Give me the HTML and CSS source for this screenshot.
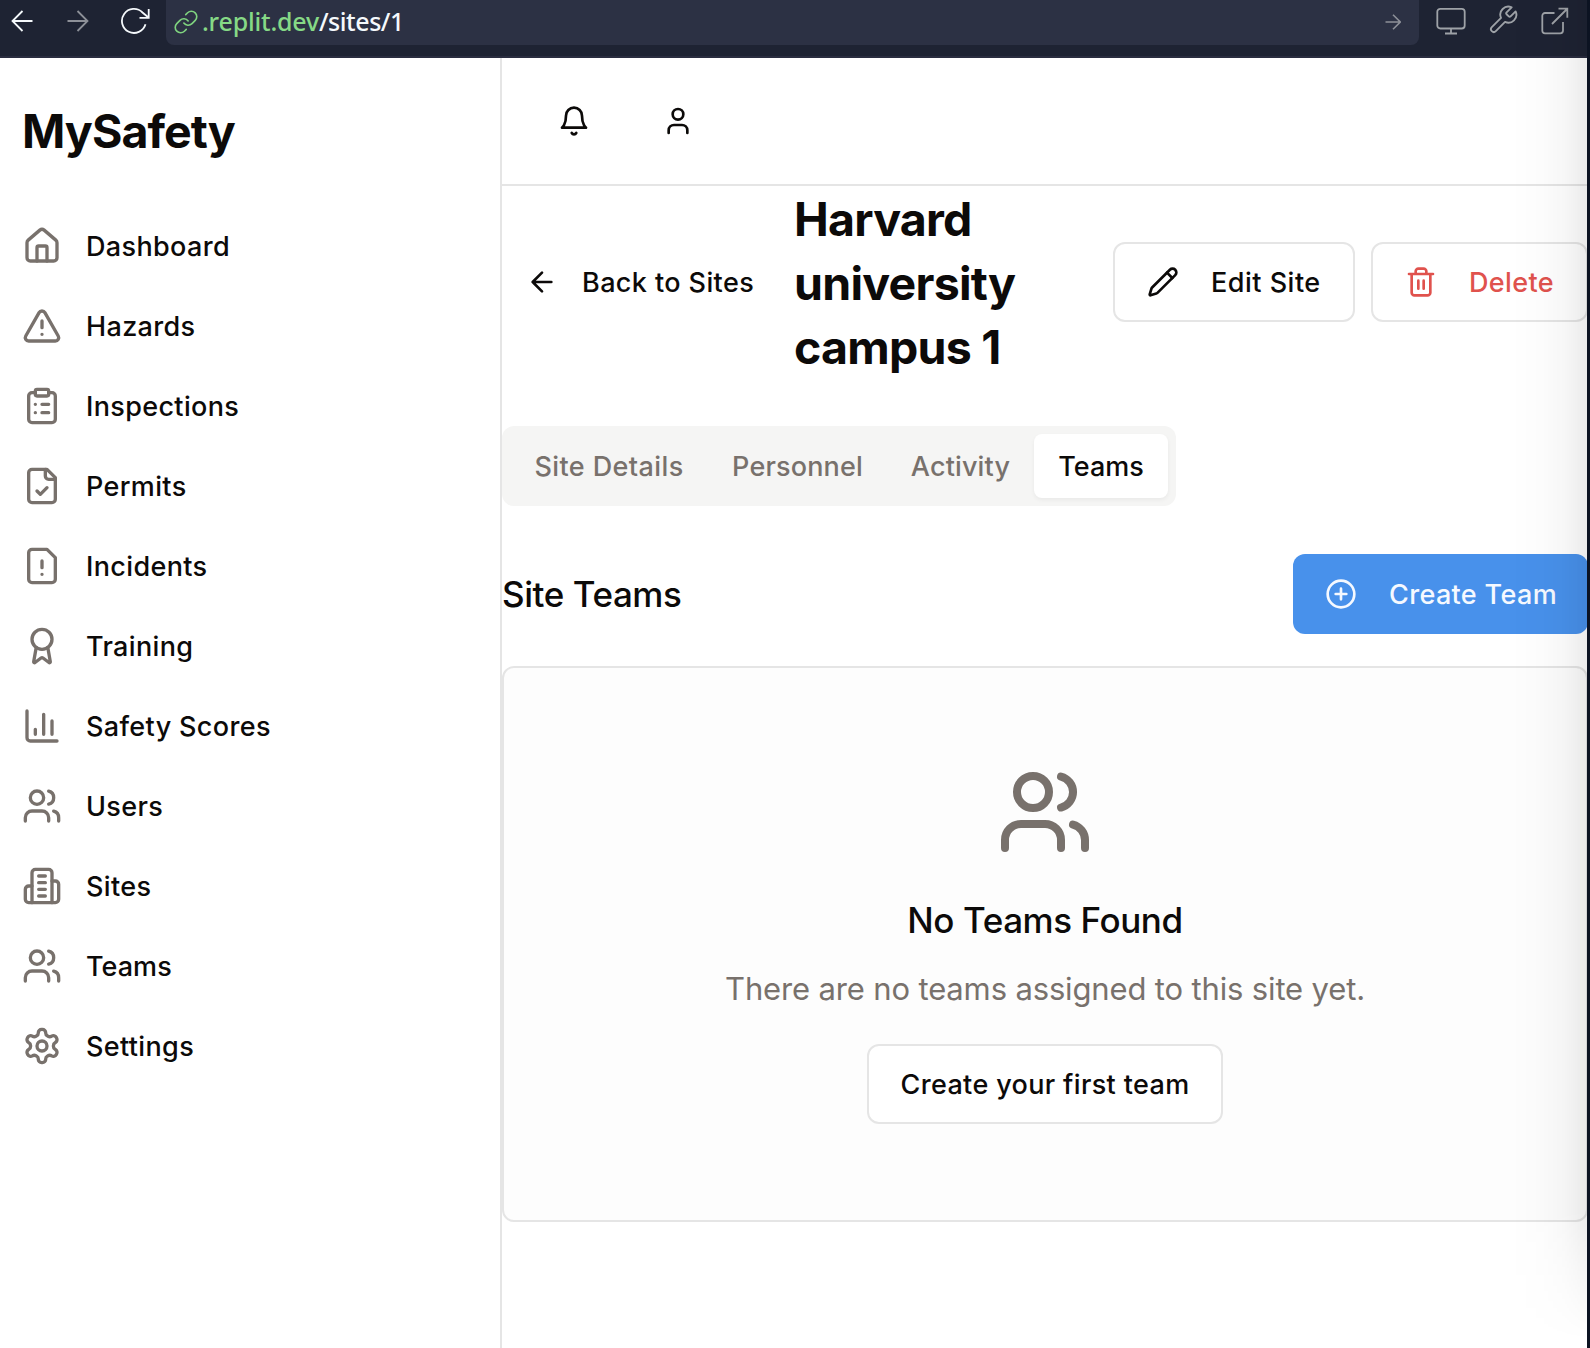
FILE: index.html
```html
<!DOCTYPE html>
<html lang="en">
<head>
<meta charset="utf-8">
<title>MySafety</title>
<link rel="stylesheet" href="styles.css">
</head>
<body>
<svg class="sprite" width="0" height="0" aria-hidden="true">
  <symbol id="users" viewBox="0 0 24 24"><path d="M16 21v-2a4 4 0 0 0-4-4H6a4 4 0 0 0-4 4v2"/><circle cx="9" cy="7" r="4"/><path d="M22 21v-2a4 4 0 0 0-3-3.87"/><path d="M16 3.13a4 4 0 0 1 0 7.75"/></symbol>
</svg>
<div class="window">
  <header class="browser">
    <svg class="b-back" viewBox="0 0 22 22"><path d="M21.500 11H1.500M11.500 1L1.500 11l10 10"/></svg>
    <svg class="b-forward" viewBox="0 0 22 22"><path d="M.5 11h20M10.500 1l10 10-10 10"/></svg>
    <svg class="b-reload" viewBox="0 0 30 28"><path d="M25.500 17.200A12 12 0 1 1 22.500 5.500l6 5"/><path d="M28.700 2v8.800H19.500"/></svg>
    <div class="address">
      <svg class="b-link" viewBox="0 0 24 24"><path d="M10 13a5 5 0 0 0 7.540.540l3-3a5 5 0 0 0-7.070-7.070l-1.720 1.710"/><path d="M14 11a5 5 0 0 0-7.540-.540l-3 3a5 5 0 0 0 7.070 7.070l1.710-1.710"/></svg>
      <span class="url"><span class="host">.replit.dev</span><span class="path">/sites/1</span></span>
      <svg class="b-go" viewBox="0 0 16 16"><path d="M.5 8h15M8 .7L15.300 8 8 15.300"/></svg>
    </div>
    <div class="tools">
      <svg class="b-monitor" viewBox="0 0 30 28"><rect x="1.300" y="1.800" width="27.400" height="19.700" rx="3"/><path d="M15 21.500v5M9 26.500h12"/></svg>
      <svg class="b-wrench" viewBox="0 0 24 24"><path d="M14.700 6.300a1 1 0 0 0 0 1.400l1.600 1.600a1 1 0 0 0 1.400 0l3.770-3.770a6 6 0 0 1-7.940 7.940l-6.910 6.910a2.120 2.120 0 0 1-3-3l6.910-6.910a6 6 0 0 1 7.940-7.940l-3.760 3.760z"/></svg>
      <svg class="b-external" viewBox="0 0 28 28"><path d="M13.500 6H4a2.700 2.700 0 0 0-2.700 2.700v15A2.700 2.700 0 0 0 4 26.300h15.300a2.700 2.700 0 0 0 2.700-2.700V15"/><path d="M17.500 1.700h8.800v9M26 2L11 17"/></svg>
    </div>
  </header>

  <div class="app">
    <aside class="sidebar">
      <div class="brand">MySafety</div>
      <nav class="nav">
        <a class="nav-item"><svg viewBox="0 0 24 24"><path d="M15 21v-8a1 1 0 0 0-1-1h-4a1 1 0 0 0-1 1v8"/><path d="M3 10a2 2 0 0 1 .709-1.528l7-5.999a2 2 0 0 1 2.582 0l7 5.999A2 2 0 0 1 21 10v9a2 2 0 0 1-2 2H5a2 2 0 0 1-2-2z"/></svg><span>Dashboard</span></a>
        <a class="nav-item"><svg viewBox="0 0 24 24"><path d="m21.730 18-8-14a2 2 0 0 0-3.480 0l-8 14A2 2 0 0 0 4 21h16a2 2 0 0 0 1.730-3"/><path d="M12 9v4M12 17h.01"/></svg><span>Hazards</span></a>
        <a class="nav-item"><svg viewBox="0 0 24 24"><rect x="8" y="2" width="8" height="4" rx="1"/><path d="M16 4h2a2 2 0 0 1 2 2v14a2 2 0 0 1-2 2H6a2 2 0 0 1-2-2V6a2 2 0 0 1 2-2h2"/><path d="M12 11h4M12 16h4M8 11h.01M8 16h.01"/></svg><span>Inspections</span></a>
        <a class="nav-item"><svg viewBox="0 0 24 24"><path d="M15 2H6a2 2 0 0 0-2 2v16a2 2 0 0 0 2 2h12a2 2 0 0 0 2-2V7Z"/><path d="M14 2v4a2 2 0 0 0 2 2h4"/><path d="m9 15 2 2 4-4"/></svg><span>Permits</span></a>
        <a class="nav-item"><svg viewBox="0 0 24 24"><path d="M15 2H6a2 2 0 0 0-2 2v16a2 2 0 0 0 2 2h12a2 2 0 0 0 2-2V7Z"/><path d="M12 9v4M12 17h.01"/></svg><span>Incidents</span></a>
        <a class="nav-item"><svg viewBox="0 0 24 24"><path d="m15.477 12.890 1.515 8.526a.5.5 0 0 1-.81.47l-3.580-2.687a1 1 0 0 0-1.197 0l-3.586 2.686a.5.5 0 0 1-.81-.469l1.514-8.526"/><circle cx="12" cy="8" r="6"/></svg><span>Training</span></a>
        <a class="nav-item"><svg viewBox="0 0 24 24"><path d="M3 3v16a2 2 0 0 0 2 2h16"/><path d="M18 17V9M13 17V5M8 17v-3"/></svg><span>Safety Scores</span></a>
        <a class="nav-item"><svg><use href="#users"/></svg><span>Users</span></a>
        <a class="nav-item"><svg viewBox="0 0 24 24"><path d="M6 22V4a2 2 0 0 1 2-2h8a2 2 0 0 1 2 2v18Z"/><path d="M6 12H4a2 2 0 0 0-2 2v6a2 2 0 0 0 2 2h2"/><path d="M18 9h2a2 2 0 0 1 2 2v9a2 2 0 0 1-2 2h-2"/><path d="M10 6h4M10 10h4M10 14h4M10 18h4"/></svg><span>Sites</span></a>
        <a class="nav-item"><svg><use href="#users"/></svg><span class="snug">Teams</span></a>
        <a class="nav-item"><svg viewBox="0 0 24 24"><path d="M12.220 2h-.44a2 2 0 0 0-2 2v.18a2 2 0 0 1-1 1.730l-.43.25a2 2 0 0 1-2 0l-.15-.08a2 2 0 0 0-2.730.73l-.22.38a2 2 0 0 0 .73 2.730l.15.1a2 2 0 0 1 1 1.720v.51a2 2 0 0 1-1 1.740l-.15.09a2 2 0 0 0-.73 2.730l.22.38a2 2 0 0 0 2.730.73l.15-.08a2 2 0 0 1 2 0l.43.25a2 2 0 0 1 1 1.730V20a2 2 0 0 0 2 2h.44a2 2 0 0 0 2-2v-.18a2 2 0 0 1 1-1.730l.43-.25a2 2 0 0 1 2 0l.15.08a2 2 0 0 0 2.730-.73l.22-.39a2 2 0 0 0-.73-2.730l-.15-.08a2 2 0 0 1-1-1.740v-.5a2 2 0 0 1 1-1.740l.15-.09a2 2 0 0 0 .73-2.730l-.22-.38a2 2 0 0 0-2.730-.73l-.15.08a2 2 0 0 1-2 0l-.43-.25a2 2 0 0 1-1-1.730V4a2 2 0 0 0-2-2z"/><circle cx="12" cy="12" r="3"/></svg><span>Settings</span></a>
      </nav>
    </aside>

    <main class="main">
      <div class="topbar">
        <button class="icon-button"><svg viewBox="0 0 24 24"><path d="M6 8a6 6 0 0 1 12 0c0 7 3 9 3 9H3s3-2 3-9"/><path d="M10.300 21a1.940 1.940 0 0 0 3.400 0"/></svg></button>
        <button class="icon-button"><svg viewBox="0 0 24 24"><path d="M19 21v-2a4 4 0 0 0-4-4H9a4 4 0 0 0-4 4v2"/><circle cx="12" cy="7" r="4"/></svg></button>
      </div>

      <div class="page-head">
        <button class="back"><svg viewBox="0 0 24 24"><path d="m12 19-7-7 7-7M19 12H5"/></svg><span>Back to Sites</span></button>
        <h1 class="title">Harvard university campus 1</h1>
        <div class="actions">
          <button class="button edit"><svg viewBox="0 0 24 24"><path d="M21.174 6.812a1 1 0 0 0-3.986-3.987L3.842 16.174a2 2 0 0 0-.5.83l-1.321 4.352a.5.5 0 0 0 .623.622l4.353-1.320a2 2 0 0 0 .83-.497z"/><path d="m15 5 4 4"/></svg><span>Edit Site</span></button>
          <button class="button delete"><svg viewBox="0 0 24 24"><path d="M3 6h18M19 6v14c0 1-1 2-2 2H7c-1 0-2-1-2-2V6M8 6V4c0-1 1-2 2-2h4c1 0 2 1 2 2v2M10 11v6M14 11v6"/></svg><span>Delete</span></button>
        </div>
      </div>

      <div class="tabs">
        <button class="tab details">Site Details</button>
        <button class="tab personnel">Personnel</button>
        <button class="tab activity">Activity</button>
        <button class="tab active">Teams</button>
      </div>

      <div class="section-head">
        <h2 class="heading">Site Teams</h2>
        <button class="button primary"><svg viewBox="0 0 24 24"><circle cx="12" cy="12" r="10"/><path d="M8 12h8M12 8v8"/></svg><span>Create Team</span></button>
      </div>

      <section class="card">
        <svg class="card-icon"><use href="#users"/></svg>
        <h3 class="card-title">No Teams Found</h3>
        <p class="card-text">There are no teams assigned to this site yet.</p>
        <button class="button first">Create your first team</button>
      </section>
    </main>
  </div>
  <div class="edge-shade"></div>
</div>
</body>
</html>
```
FILE: styles.css
```css
* { box-sizing: border-box; }

body {
  margin: 0;
  background: #0c1322;
  font-family: Inter, "Liberation Sans", sans-serif;
  color: #0c0a09;
}

.sprite { position: absolute; }

svg {
  flex: none;
  fill: none;
  stroke: currentColor;
  stroke-width: 2;
  stroke-linecap: round;
  stroke-linejoin: round;
}

button {
  margin: 0;
  padding: 0;
  border: 0;
  background: none;
  color: inherit;
  font: inherit;
  white-space: nowrap;
}

.window {
  position: relative;
  width: 1587px;
  height: 1348px;
  overflow: hidden;
  background: #fff;
  display: flex;
  flex-direction: column;
}

/* Browser bar */
.browser {
  flex: none;
  height: 58px;
  padding-left: 11px;
  border-bottom: 2px solid #2a2d40;
  background: #1e2333;
  display: flex;
  align-items: flex-start;
  color: #f5f9fc;
}
.browser svg { stroke-width: 1.8; stroke-linecap: butt; stroke-linejoin: miter; }
.browser .b-back { width: 22px; height: 22px; margin-top: 10px; }
.browser .b-forward { width: 22px; height: 22px; margin: 10px 0 0 34px; color: #8d9098; }
.browser .b-reload { width: 30px; height: 28px; margin: 7px 0 0 31px; }
.address {
  width: 1253px;
  height: 45px;
  margin-left: 16px;
  padding: 0 18px 2px 7px;
  border-radius: 0 0 8px 8px;
  background: #2c3144;
  display: flex;
  align-items: center;
}
.browser .b-link { width: 26px; height: 26px; color: #7fd37f; stroke-width: 1.5; stroke-linecap: round; }
.url {
  flex: 1;
  margin-left: 3px;
  padding-bottom: 2px;
  font: 500 25px/38px "Noto Sans", sans-serif;
}
.host { color: #86d986; letter-spacing: -0.2px; }
.path { letter-spacing: -0.45px; }
.browser .b-go { width: 16px; height: 16px; color: #8d9098; stroke-width: 1.6; }
.tools { display: flex; color: #9ea2a7; }
.browser .b-monitor { width: 30px; height: 28px; margin: 7px 0 0 17px; }
.browser .b-wrench { width: 32px; height: 32px; margin: 4px 0 0 21px; stroke-width: 1.4; stroke-linejoin: round; }
.browser .b-external { width: 28px; height: 28px; margin: 7px 0 0 22px; }

/* Layout */
.app { flex: 1; display: flex; min-height: 0; }

.sidebar {
  flex: none;
  width: 502px;
  padding: 48px 0 0 22px;
  border-right: 2px solid #e5e5e5;
}
.brand {
  height: 50px;
  font-size: 46.5px;
  line-height: 50px;
  font-weight: 700;
  letter-spacing: -0.95px;
}
.nav { margin-top: 50px; display: flex; flex-direction: column; }
.nav-item {
  height: 80px;
  display: flex;
  align-items: center;
  gap: 24px;
  font-size: 27px;
  font-weight: 500;
  letter-spacing: 0.35px;
}
.nav-item svg { width: 40px; height: 40px; color: #78716c; }
.snug { letter-spacing: 0.05px; }

.main { flex: none; width: 1086px; }

.topbar {
  height: 128px;
  padding: 0 32px;
  border-bottom: 2px solid #e5e5e5;
  display: flex;
  align-items: center;
  gap: 24px;
}
.icon-button { width: 80px; height: 80px; display: grid; place-items: center; }
.icon-button svg { width: 32px; height: 32px; }

.page-head { height: 192px; display: flex; align-items: center; }
.back {
  width: 276px;
  padding-left: 24px;
  display: flex;
  align-items: center;
  gap: 24px;
  font-size: 27px;
  font-weight: 500;
  letter-spacing: 0.4px;
}
.back svg, .button svg { width: 32px; height: 32px; }
.title {
  width: 240px;
  margin: 0 auto 0 16px;
  padding-top: 2px;
  font-size: 46.5px;
  line-height: 64px;
  font-weight: 700;
  letter-spacing: -0.75px;
}
.actions { display: flex; gap: 16px; }

.button {
  height: 80px;
  padding: 0 32px;
  border: 2px solid #e5e5e5;
  border-radius: 12px;
  background: #fff;
  display: flex;
  align-items: center;
  gap: 32px;
  font-size: 27px;
  font-weight: 500;
  letter-spacing: 0.35px;
}
.edit { width: 242px; letter-spacing: 0.5px; }
.delete { width: 217px; color: #e0524d; }

.tabs {
  width: 674px;
  height: 80px;
  margin-top: 48px;
  padding: 8px;
  border-radius: 12px;
  background: #f5f5f4;
  display: flex;
}
.tab {
  height: 64px;
  border-radius: 8px;
  color: #78716c;
  font-size: 27px;
  font-weight: 500;
}
.details { width: 198px; letter-spacing: 0.4px; }
.personnel { width: 179px; letter-spacing: 0.15px; }
.activity { width: 147px; letter-spacing: 0.15px; }
.active {
  width: 134px;
  background: #fff;
  color: #0c0a09;
  box-shadow: 0 2px 4px rgba(0, 0, 0, 0.05);
}

.section-head {
  height: 80px;
  margin-top: 48px;
  display: flex;
  align-items: center;
  justify-content: space-between;
}
.heading, .card-title { margin: 0; font-size: 35px; font-weight: 500; letter-spacing: -0.43px; }
.primary {
  width: 295px;
  border: 0;
  background: #4891eb;
  color: #f5f9ff;
}

.card {
  height: 556px;
  margin-top: 32px;
  padding-top: 96px;
  border: 2px solid #e5e5e5;
  border-radius: 12px;
  background: #fdfdfd;
  display: flex;
  flex-direction: column;
  align-items: center;
}
.card-icon { width: 96px; height: 96px; color: #78716c; }
.card-title { margin-top: 32px; line-height: 56px; }
.card-text {
  margin: 17px 0 31px;
  color: #78716c;
  font-size: 31px;
  line-height: 48px;
  letter-spacing: -0.15px;
}

/* Shade cast along the right edge */
.edge-shade {
  position: absolute;
  top: 0;
  right: 0;
  width: 76px;
  height: 100%;
  background: linear-gradient(to right, rgba(0,0,0,0), rgba(0,0,0,0.01) 40%, rgba(0,0,0,0.032) 70%, rgba(0,0,0,0.078));
  -webkit-mask-image: linear-gradient(to bottom, #000 1210px, transparent 1340px);
  mask-image: linear-gradient(to bottom, #000 1210px, transparent 1340px);
  pointer-events: none;
}
```
